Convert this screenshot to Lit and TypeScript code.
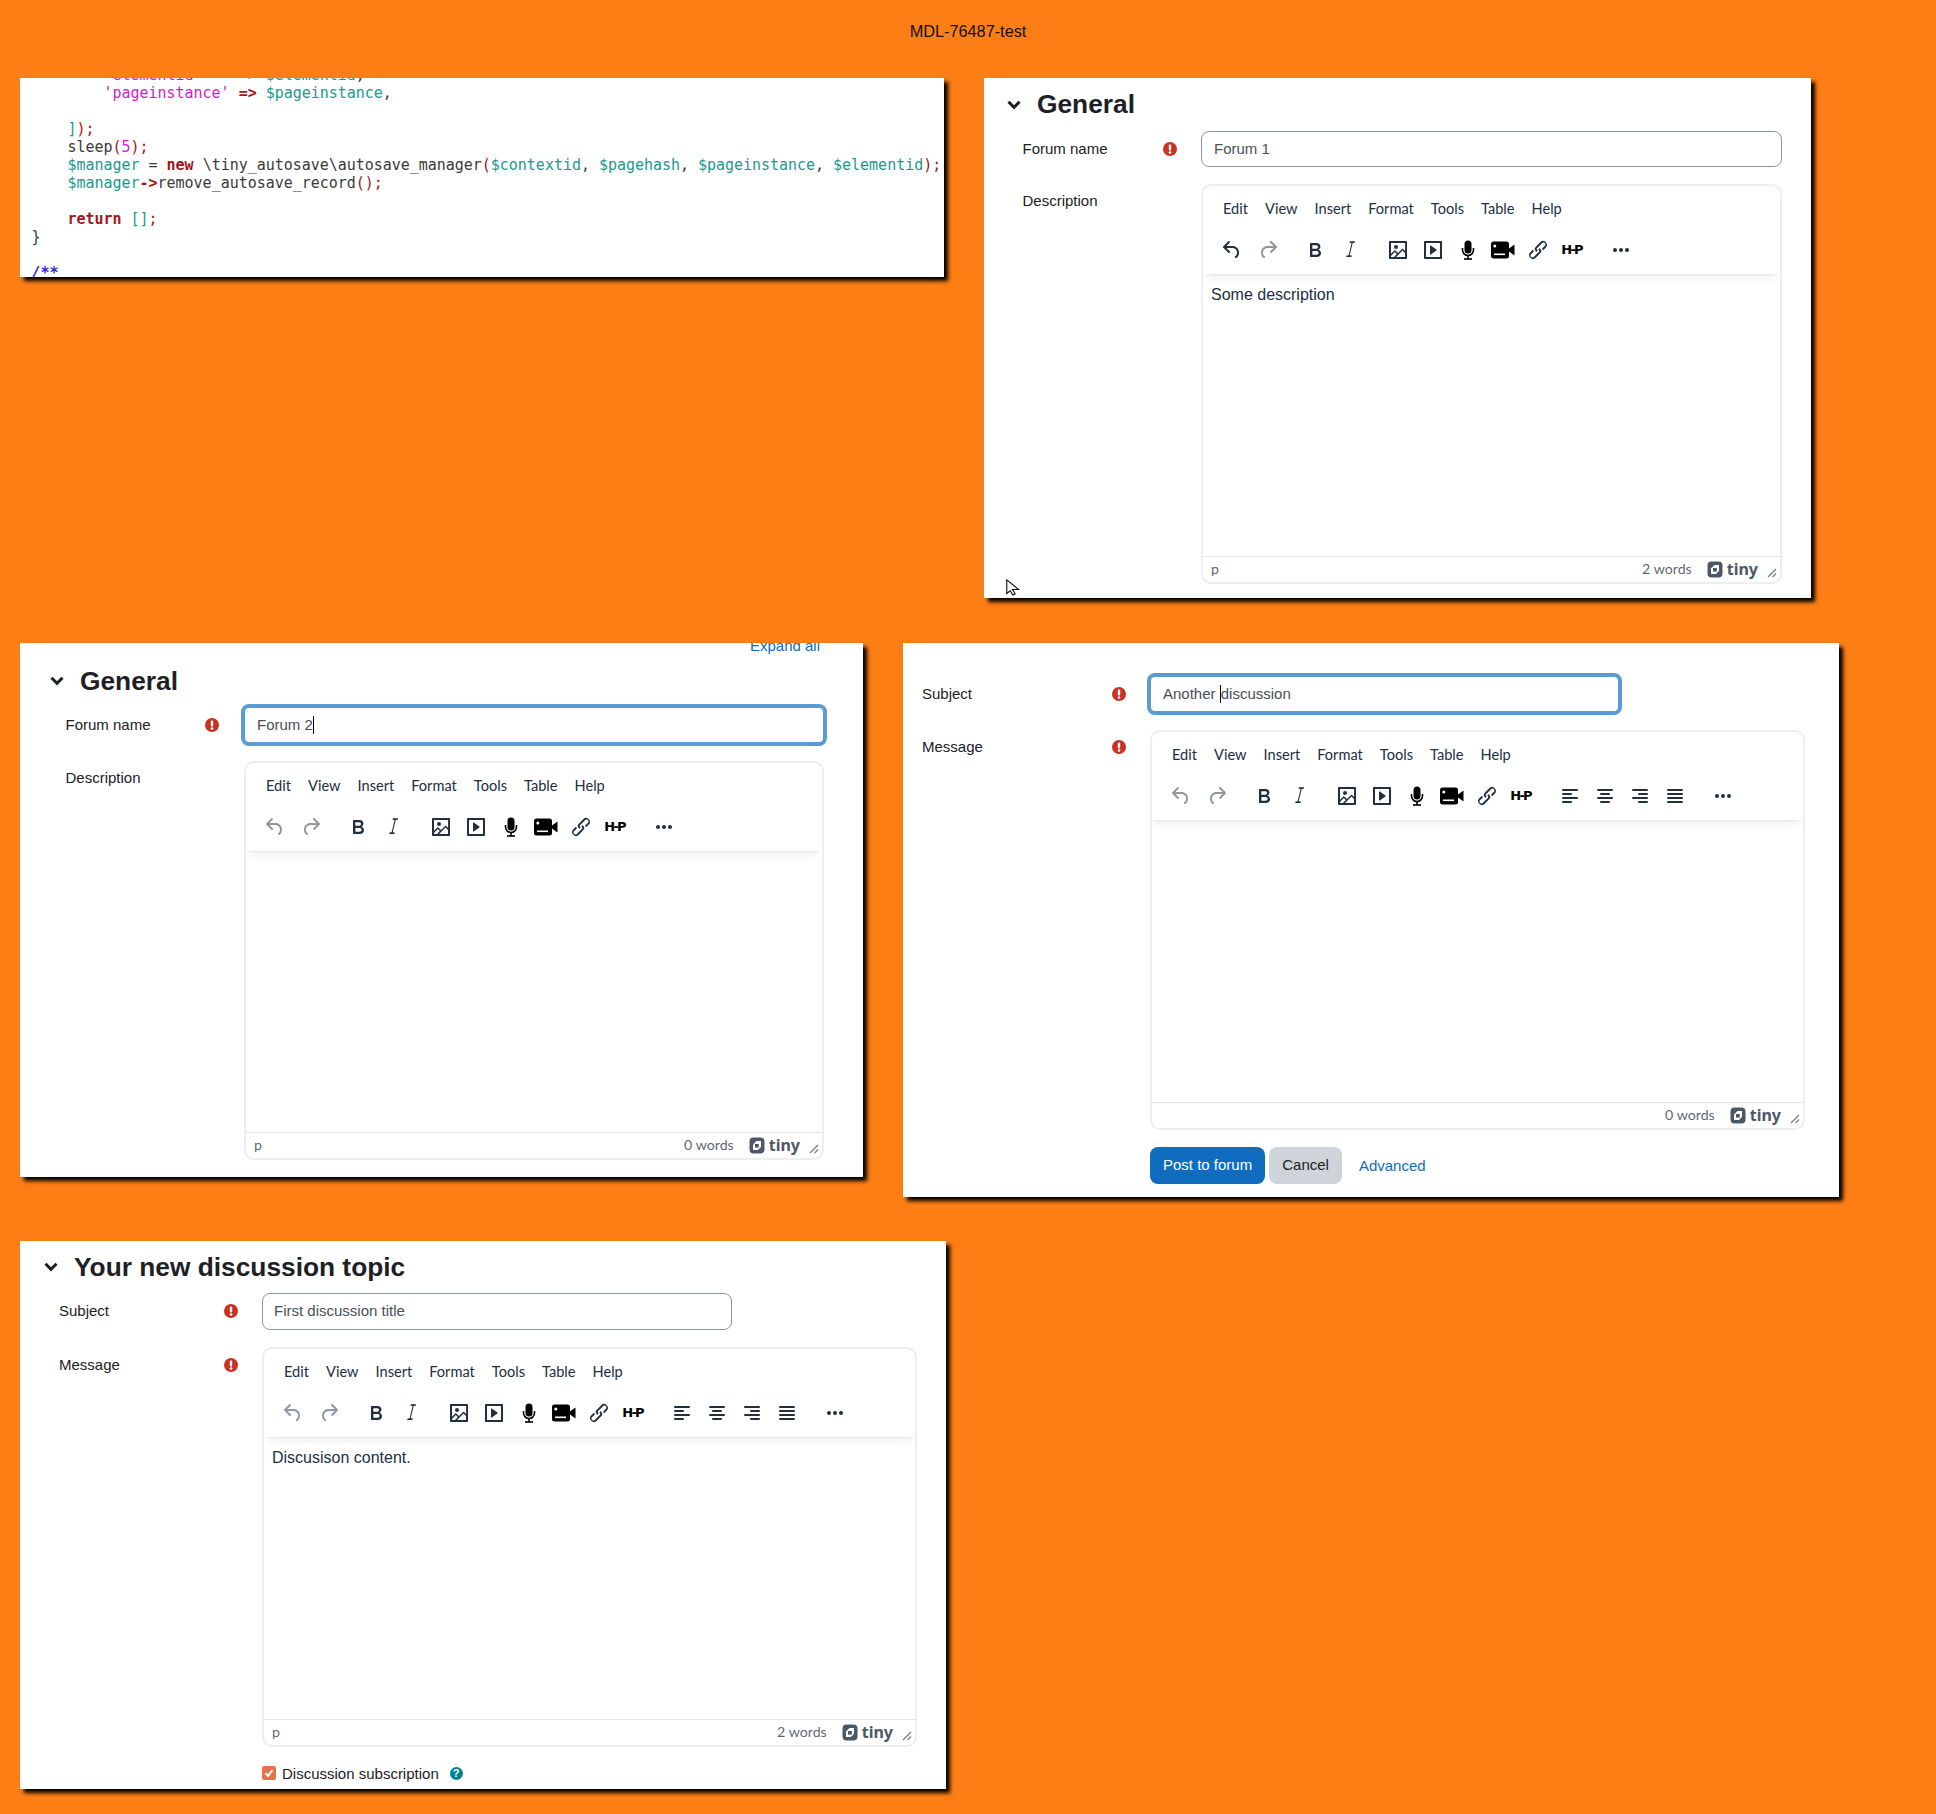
import { LitElement, html, css, svg } from "lit";
import { customElement } from "lit/decorators.js";

const P = {
  undo: "M6.4 8H12c3.7 0 6.2 2 6.8 5.1.6 2.7-.4 5.6-2.3 6.8a1 1 0 0 1-1-1.8c1.1-.6 1.8-2.7 1.4-4.6-.5-2.1-2.1-3.5-4.9-3.5H6.4l3.3 3.3a1 1 0 1 1-1.4 1.4l-5-5a1 1 0 0 1 0-1.4l5-5a1 1 0 0 1 1.4 1.4L6.4 8Z",
  redo: "M17.6 10H12c-2.8 0-4.4 1.4-4.9 3.5-.4 2 .3 4 1.4 4.6a1 1 0 1 1-1 1.8c-2-1.2-2.9-4.1-2.3-6.8.6-3 3-5.1 6.8-5.1h5.6l-3.3-3.3a1 1 0 1 1 1.4-1.4l5 5a1 1 0 0 1 0 1.4l-5 5a1 1 0 0 1-1.4-1.4l3.3-3.3Z",
  bold: "M7.8 19c-.3 0-.5 0-.6-.2l-.2-.5V5.7c0-.2 0-.4.2-.5l.6-.2h5c1.5 0 2.7.3 3.5 1 .7.6 1.1 1.4 1.1 2.5a3 3 0 0 1-.6 1.9c-.4.6-1 1-1.6 1.2.4.1.9.3 1.3.6s.8.7 1 1.2c.4.4.5 1 .5 1.6 0 1.3-.4 2.3-1.3 3-.8.7-2.1 1-3.8 1H7.8Zm5-8.3c.6 0 1.2-.1 1.6-.5.4-.3.6-.7.6-1.3 0-1.1-.8-1.7-2.3-1.7H9.3v3.5h3.4Zm.5 6c.7 0 1.3-.1 1.7-.4.4-.4.6-.9.6-1.5s-.2-1-.7-1.4c-.4-.3-1-.4-2-.4H9.4v3.8h4Z",
  italic: "M16.7 4.7l-2 .2-3 12.4 2.1.2-.4 1.5H8.2l.4-1.5 2-.2 3-12.4-2.1-.2.4-1.5h5.2z",
  image: "m5 15.7 3.3-3.2c.3-.3.7-.3 1 0L12 15l4.1-4c.3-.4.8-.4 1 0l2 1.9V5H5v10.7ZM5 18V19h3l2.8-2.9-2-2L5 17.9Zm14-3-2.5-2.4-6.4 6.5H19v-4ZM4 3h16c.6 0 1 .4 1 1v16c0 .6-.4 1-1 1H4a1 1 0 0 1-1-1V4c0-.6.4-1 1-1Zm6 8a2 2 0 1 0 0-4 2 2 0 0 0 0 4Z",
  media: "M4 3h16c.6 0 1 .4 1 1v16c0 .6-.4 1-1 1H4a1 1 0 0 1-1-1V4c0-.6.4-1 1-1Zm1 2v14h14V5H5Zm4.8 2.6 5.6 4a.5.5 0 0 1 0 .8l-5.6 4A.5.5 0 0 1 9 16V8a.5.5 0 0 1 .8-.4Z",
  link: "M6.2 12.3a1 1 0 0 1 1.4 1.4l-2 2a2 2 0 1 0 2.6 2.8l4.8-4.8a1 1 0 0 0 0-1.4 1 1 0 1 1 1.4-1.3 2.9 2.9 0 0 1 0 4L9.6 20a3.9 3.9 0 0 1-5.5-5.5l2-2Zm11.6-.6a1 1 0 0 1-1.4-1.4l2-2a2 2 0 1 0-2.6-2.8L11 10.3a1 1 0 0 0 0 1.4A1 1 0 1 1 9.6 13a2.9 2.9 0 0 1 0-4L14.4 4a3.9 3.9 0 0 1 5.5 5.5l-2 2Z",
};

const pathIcon = (d: string, off = false) =>
  html`<span class="tb ${off ? "off" : ""}"><svg width="24" height="24" viewBox="0 0 24 24"><path d=${d} fill-rule="evenodd"></path></svg></span>`;

const mic = html`<span class="tb"><svg width="24" height="24" viewBox="0 0 24 24">
  <rect x="8.5" y="2.5" width="7" height="13" rx="3.5" fill="#000"></rect>
  <path d="M6.5 10v2a5.5 5.5 0 0 0 11 0v-2" fill="none" stroke="#000" stroke-width="1.6"></path>
  <rect x="11.2" y="17" width="1.6" height="4" fill="#000"></rect>
  <rect x="8" y="20.2" width="8" height="1.6" fill="#000"></rect>
</svg></span>`;

const video = html`<span class="tb"><svg width="26" height="24" viewBox="0 0 26 24">
  <rect x="1" y="3.5" width="18" height="17" rx="2.5" fill="#000"></rect>
  <path d="M19 10.5 24.5 6.5v11L19 13.5Z" fill="#000"></path>
  <circle cx="4.8" cy="8" r="1.5" fill="#fff"></circle>
  <rect x="4" y="15.5" width="11" height="1.6" fill="#fff"></rect>
</svg></span>`;

const h5p = html`<span class="tb"><span class="h5p">H-P</span></span>`;

const more = html`<span class="tb"><svg width="24" height="24" viewBox="0 0 24 24">
  <circle cx="6" cy="12" r="2"></circle><circle cx="12" cy="12" r="2"></circle><circle cx="18" cy="12" r="2"></circle>
</svg></span>`;

const align = (rows: [number, number][]) =>
  html`<span class="tb"><svg width="24" height="24" viewBox="0 0 24 24">
    ${rows.map((r, i) => svg`<rect x=${r[0]} y=${5 + i * 4} width=${r[1]} height="2" rx="1"></rect>`)}
  </svg></span>`;

const alignLeft = align([[4, 16], [4, 10], [4, 16], [4, 10]]);
const alignCenter = align([[4, 16], [7, 10], [4, 16], [7, 10]]);
const alignRight = align([[4, 16], [10, 10], [4, 16], [10, 10]]);
const alignFull = align([[4, 16], [4, 16], [4, 16], [4, 16]]);

const required = html`<svg class="req" width="14" height="14" viewBox="0 0 14 14">
  <circle cx="7" cy="7" r="7" fill="#ca3120"></circle>
  <rect x="5.8" y="2.6" width="2.4" height="5.8" rx="1" fill="#fff"></rect>
  <circle cx="7" cy="10.5" r="1.35" fill="#fff"></circle>
</svg>`;

const chevron = html`<svg class="chev" width="14" height="10" viewBox="0 0 14 10">
  <path d="M1.5 1.8 7 7.4l5.5-5.6" fill="none" stroke="#1d2125" stroke-width="3"></path>
</svg>`;

const tinyLogo = html`<span class="logo"><svg width="16" height="17" viewBox="0 0 16 17">
  <path d="M4.5.5h7a4 4 0 0 1 4 4v8a4 4 0 0 1-4 4h-7a4 4 0 0 1-4-4v-8a4 4 0 0 1 4-4Z" fill="#4d5866"></path>
  <path d="M7.5 4h4.5v6l-3.2 3H4V7.5Z" fill="#fff"></path>
  <rect x="6" y="7" width="3.8" height="3.6" fill="#4d5866"></rect>
</svg><span class="logotext">tiny</span></span>`;

const grip = html`<svg class="grip" width="10" height="10" viewBox="0 0 10 10">
  <path d="M1 9 9 1M5.5 9 9 5.5" stroke="#6f7883" stroke-width="1.1" fill="none"></path>
</svg>`;

type EditorOpts = { text?: string; words: string; path?: string; undo?: boolean; aligns?: boolean };

const editor = (o: EditorOpts) => html`<div class="editor">
  <div class="head">
    <div class="menu">
      ${["Edit", "View", "Insert", "Format", "Tools", "Table", "Help"].map((m) => html`<span>${m}</span>`)}
    </div>
    <div class="toolbar">
      <div class="group hist">${pathIcon(P.undo, !o.undo)}${pathIcon(P.redo, true)}</div>
      <div class="group">${pathIcon(P.bold)}${pathIcon(P.italic)}</div>
      <div class="group">${pathIcon(P.image)}${pathIcon(P.media)}${mic}${video}${pathIcon(P.link)}${h5p}</div>
      ${o.aligns ? html`<div class="group">${alignLeft}${alignCenter}${alignRight}${alignFull}</div>` : ""}
      <div class="group">${more}</div>
    </div>
  </div>
  <div class="content">${o.text ?? ""}</div>
  <div class="status">
    <span class="path">${o.path ?? ""}</span>
    <span class="words">${o.words}</span>
    ${tinyLogo}${grip}
  </div>
</div>`;

const labelCell = (t: string, req = true) =>
  html`<div class="label"><span>${t}</span>${req ? required : ""}</div>`;

const s = (c: string, t: string) => html`<span class=${c}>${t}</span>`;

@customElement("app-root")
export class AppRoot extends LitElement {
  static styles = css`
    :host { display: block; min-height: 1814px; background: #fd7e14; font-family: "Liberation Sans", Arial, sans-serif; color: #1d2125; font-size: 15px; }
    .title { height: 56px; padding-top: 22px; line-height: 18px; font-size: 16.3px; text-align: center; color: #111; }
    .row { display: flex; align-items: flex-start; padding-left: 20px; }
    .r2 { margin-top: 45px; }
    .r3 { margin-top: 44px; }
    .panel { background: #fff; box-shadow: 4px 4px 4px #000; box-sizing: border-box; overflow: hidden; position: relative; flex: none; }

    .p1 { width: 924px; height: 199px; }
    .code { margin: -12px 0 0 11.5px; font: 15px/18px "DejaVu Sans Mono", monospace; letter-spacing: -.025px; white-space: pre; color: #3a3a3a; }
    .code .v { color: #1a9a8c; }
    .code .t { color: #d61bc8; }
    .code .k { color: #a31621; font-weight: bold; }
    .code .o { color: #a31621; }
    .code .b { color: #1a9a8c; }
    .code .c { color: #2a2ad0; font-style: italic; font-weight: bold; }

    .p2 { width: 827px; height: 520px; margin-left: 40px; --pad: 38.5px; --col: 178.5px; --req: 24px; --hp: 23px; --hh: 53px; --eh: 400px; --gap: 17px; }
    .p3 { width: 843px; height: 534px; --pad: 45.5px; --col: 178.5px; --req: 25px; --hp: 30px; --hh: 49px; --eh: 399px; --gap: 15px; }
    .p4 { width: 936px; height: 554px; margin-left: 40px; padding-top: 30px; --pad: 19px; --col: 228px; --req: 24px; --eh: 400px; --gap: 15px; }
    .p5 { width: 926px; height: 548px; --pad: 39px; --col: 203px; --req: 24px; --hp: 24px; --hh: 52px; --eh: 400px; --gap: 17px; }

    .expand { margin-top: -6px; height: 18px; line-height: 17px; text-align: right; padding-right: 43px; color: #0f6cbf; }
    .heading { display: flex; align-items: center; gap: 16px; height: var(--hh); padding-left: var(--hp); font-size: 26.3px; font-weight: bold; line-height: 1; color: #1d2125; }
    .p3 .heading { position: relative; top: 1.5px; }
    .chev { flex: none; }

    .frow { display: grid; grid-template-columns: var(--col) 1fr; padding-left: var(--pad); }
    .frow.center { align-items: center; }
    .frow.top { align-items: start; margin-top: var(--gap); }
    .label { display: flex; align-items: center; justify-content: space-between; padding-right: var(--req); line-height: 20px; }
    .frow.top .label { padding-top: 7px; }
    .p5 .frow.top .label { padding-top: 8px; }
    .p5 .frow.center .label { margin-top: -1px; }
    .req { flex: none; }

    .input { box-sizing: border-box; height: 36px; width: 581px; border: 1px solid #8f959e; border-radius: 8px; padding: 0 12px; line-height: 34px; color: #495057; }
    .p5 .input { width: 470px; height: 37px; padding: 0 11px; }
    .focus { border: 4px solid #5b9bd5; height: 42px; line-height: 34px; margin-left: -3px; padding: 0 10px; color: #495057; }
    .p3 .focus { width: 586px; padding: 0 12px; }
    .p4 .focus { width: 475px; margin-left: -3px; padding: 0 12px; }
    .caret { display: inline-block; width: 0; height: 18px; border-left: 1px solid #000; vertical-align: -4px; }

    .editor { box-sizing: border-box; border: 2px solid #eee; border-radius: 10px; display: flex; flex-direction: column; height: var(--eh); width: 581px; overflow: hidden; background: #fff; }
    .p3 .editor { width: 580px; }
    .p4 .editor { width: 655px; }
    .p5 .editor { width: 655px; }
    .head { height: 88px; box-sizing: border-box; box-shadow: 0 2px 2px -2px rgba(34,47,62,.15), 0 8px 8px -4px rgba(34,47,62,.08); flex: none; position: relative; z-index: 1; }
    .menu { display: flex; gap: 17px; padding: 0 0 0 20px; height: 46px; align-items: center; font: 14.6px/20px Lato, sans-serif; color: #222f3e; }
    .toolbar { display: flex; padding-left: 11px; height: 35px; align-items: center; gap: 13px; }
    .group { display: flex; }
    .hist { margin-right: -2px; }
    .tb { width: 35px; height: 32px; display: flex; align-items: center; justify-content: center; fill: #222f3e; flex: none; }
    .hist .tb { width: 36px; }
    .tb.off { fill: rgba(34,47,62,.5); }
    .h5p { font: 900 13px/1 "DejaVu Sans", sans-serif; color: #000; letter-spacing: -1.8px; position: relative; left: -1px; }
    .content { flex: 1; padding: 10px 0 0 8px; font-size: 16px; line-height: 22px; color: #222f3e; }
    .status { flex: none; height: 25px; border-top: 1px solid #e3e3e3; display: flex; align-items: center; padding: 0 3px 0 8px; font: 14.2px/1 Lato, sans-serif; color: rgba(34,47,62,.75); }
    .path { flex: 1; }
    .words { margin-right: 15px; }
    .logo { display: flex; align-items: center; gap: 4px; }
    .logotext { font: 700 16px/1 "Noto Sans", sans-serif; color: #4d5866; position: relative; top: -1px; }
    .grip { margin-left: 9px; margin-top: 6px; }

    .buttons { display: flex; gap: 4px; align-items: center; margin: 17px 0 0 247px; height: 37px; }
    .btn { box-sizing: border-box; height: 37px; line-height: 36px; border-radius: 8px; padding: 0 13px; flex: none; }
    .primary { background: #0f6cbf; color: #fff; }
    .secondary { background: #ced4da; color: #1d2125; }
    .adv { color: #0f6cbf; margin-left: 13px; line-height: 35px; }

    .check { display: flex; align-items: center; margin: 15px 0 0 242px; height: 22px; }
    .box { width: 14px; height: 14px; border-radius: 2px; background: #e8734a; margin-right: 6px; display: flex; flex: none; }
    .help { width: 13px; height: 13px; border-radius: 50%; background: #008196; color: #fff; font-size: 11px; font-weight: bold; line-height: 13px; text-align: center; margin-left: 11px; }
    .cursor { position: absolute; left: 21px; top: 501px; }
  `;

  render() {
    return html`
      <div class="title">MDL-76487-test</div>
      <div class="row">
        <section class="panel p1">
          <div class="code"><div>        ${s("t", "'elementid'")}    ${s("o", "=>")} ${s("v", "$elementid")},</div><div>        ${s("t", "'pageinstance'")} ${s("k", "=>")} ${s("v", "$pageinstance")},</div><div> </div><div>    ${s("b", "]")}${s("o", ");")}</div><div>    sleep${s("o", "(")}${s("t", "5")}${s("o", ");")}</div><div>    ${s("v", "$manager")} = ${s("k", "new")} \\tiny_autosave\\autosave_manager${s("o", "(")}${s("v", "$contextid")}, ${s("v", "$pagehash")}, ${s("v", "$pageinstance")}, ${s("v", "$elementid")}${s("o", ");")}</div><div>    ${s("v", "$manager")}${s("k", "->")}remove_autosave_record${s("o", "();")}</div><div> </div><div>    ${s("k", "return")} ${s("b", "[]")}${s("o", ";")}</div><div>}</div><div> </div><div>${s("c", "/**")}</div></div>
        </section>
        <section class="panel p2">
          <div class="heading">${chevron}<span>General</span></div>
          <div class="frow center">${labelCell("Forum name")}<div class="input">Forum 1</div></div>
          <div class="frow top">${labelCell("Description", false)}${editor({ text: "Some description", words: "2 words", path: "p", undo: true })}</div>
          <svg class="cursor" width="16" height="17" viewBox="0 0 14 15"><path d="M1.5 .8v12l3-2.4 2.4 3.8 2-1.2-2.4-3.7H12Z" fill="#fff" stroke="#111" stroke-width="1"></path></svg>
        </section>
      </div>
      <div class="row r2">
        <section class="panel p3">
          <div class="expand">Expand all</div>
          <div class="heading">${chevron}<span>General</span></div>
          <div class="frow center">${labelCell("Forum name")}<div class="input focus">Forum 2<span class="caret"></span></div></div>
          <div class="frow top">${labelCell("Description", false)}${editor({ words: "0 words", path: "p" })}</div>
        </section>
        <section class="panel p4">
          <div class="frow center">${labelCell("Subject")}<div class="input focus">Another <span class="caret"></span>discussion</div></div>
          <div class="frow top">${labelCell("Message")}${editor({ words: "0 words", aligns: true })}</div>
          <div class="buttons"><span class="btn primary">Post to forum</span><span class="btn secondary">Cancel</span><span class="adv">Advanced</span></div>
        </section>
      </div>
      <div class="row r3">
        <section class="panel p5">
          <div class="heading">${chevron}<span>Your new discussion topic</span></div>
          <div class="frow center">${labelCell("Subject")}<div class="input">First discussion title</div></div>
          <div class="frow top">${labelCell("Message")}${editor({ text: "Discusison content.", words: "2 words", path: "p", aligns: true })}</div>
          <div class="check"><span class="box"><svg width="14" height="14" viewBox="0 0 14 14"><path d="M3.5 7.2 6 10l4.5-6" fill="none" stroke="#fff" stroke-width="2"></path></svg></span><span>Discussion subscription</span><span class="help">?</span></div>
        </section>
      </div>
    `;
  }
}
